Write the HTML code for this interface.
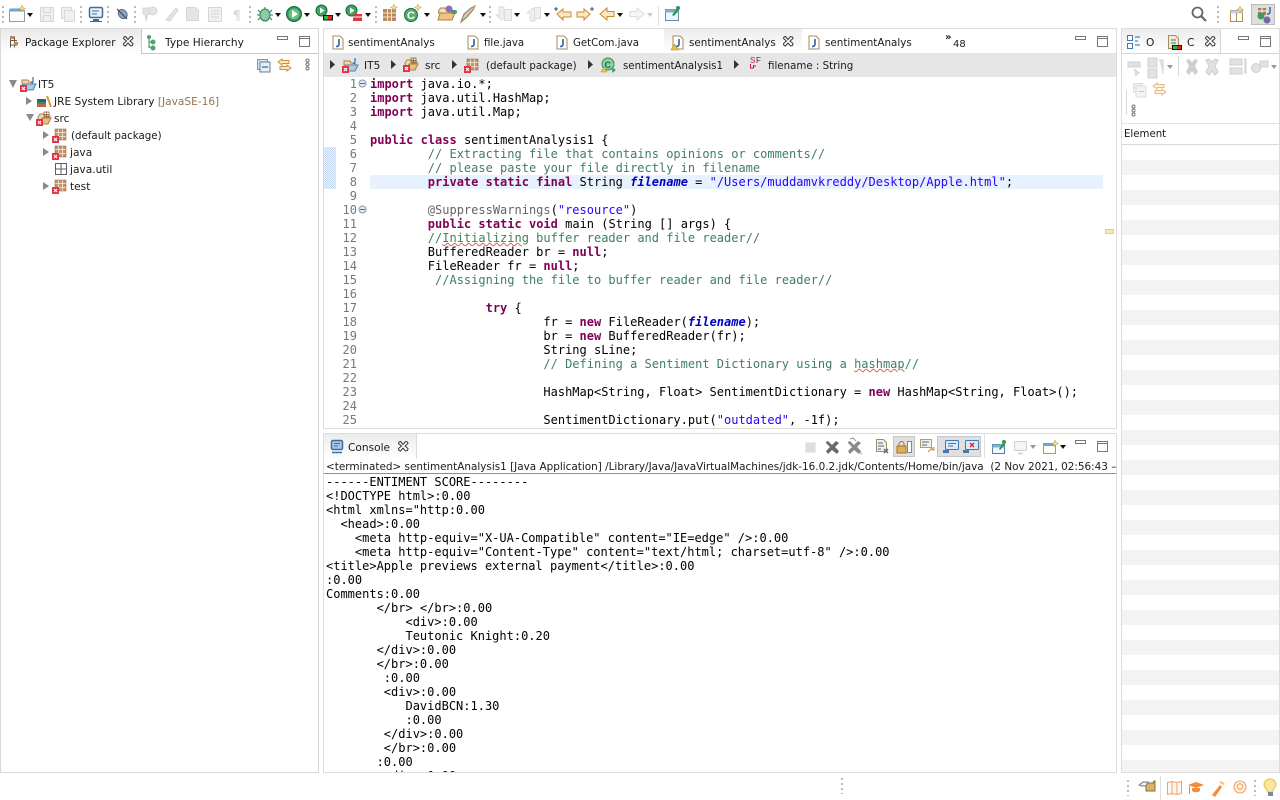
<!DOCTYPE html>
<html><head><meta charset="utf-8"><title>Eclipse</title>
<style>
html,body{margin:0;padding:0;background:#fff;width:1280px;height:800px;overflow:hidden}
body{position:relative;font-family:"DejaVu Sans","Liberation Sans",sans-serif;font-size:11px;color:#111}
.a{position:absolute}
.t{position:absolute;white-space:pre;line-height:14px;font-size:10.6px;color:#1a1a1a}
pre{position:absolute;margin:0;font-family:"DejaVu Sans Mono","Liberation Mono",monospace;font-size:12px;line-height:14px;tab-size:8;color:#000;overflow:hidden}
b.k{color:#7f0055;font-weight:bold}
i.f{color:#0000c0;font-weight:bold;font-style:italic}
.c{color:#3f7f5f}.s{color:#2a00ff}.n{color:#646464}
.w{text-decoration:underline wavy #e0604a 1px;text-underline-offset:0px}
svg{position:absolute;left:0;top:0}
</style></head><body>
<!-- panel frames -->
<div class="a" style="left:0;top:28px;width:317px;height:743px;border:1px solid #d8d8d8"></div>
<div class="a" style="left:1px;top:29px;width:141px;height:25px;background:linear-gradient(#e9e9e9,#fff)"></div>
<div class="a" style="left:141px;top:29px;width:1px;height:24px;background:#c8c8c8"></div>
<div class="a" style="left:141px;top:53px;width:177px;height:1px;background:#c8c8c8"></div>

<div class="a" style="left:323px;top:28px;width:792px;height:399px;border:1px solid #dcdcdc"></div>
<div class="a" style="left:664px;top:29px;width:138px;height:24px;background:linear-gradient(#ececec,#fff)"></div>
<div class="a" style="left:324px;top:53px;width:792px;height:24px;background:#e6e6e6"></div>
<div class="a" style="left:370px;top:175px;width:733px;height:14px;background:#e8f2fe"></div>
<div class="a" style="left:324px;top:147px;width:12px;height:42px;background:repeating-conic-gradient(#c4d6ee 0 25%,#f2f6fc 0 50%) 0 0/2px 2px"></div>
<div class="a" style="left:1105px;top:229px;width:9px;height:5px;box-sizing:border-box;background:#fbe8b4;border:1px solid #edc878"></div>

<div class="a" style="left:323px;top:433px;width:792px;height:338px;border:1px solid #dcdcdc"></div>
<div class="a" style="left:324px;top:434px;width:93px;height:25px;background:linear-gradient(#ececec,#fff)"></div>
<div class="a" style="left:416px;top:434px;width:1px;height:25px;background:#dcdcdc"></div>
<div class="a" style="left:324px;top:473px;width:792px;height:1px;background:#8f8f8f"></div>

<div class="a" style="left:1121px;top:28px;width:157px;height:743px;border:1px solid #dcdcdc"></div>
<div class="a" style="left:1122px;top:29px;width:98px;height:24px;background:linear-gradient(#ececec,#fff)"></div>
<div class="a" style="left:1122px;top:53px;width:157px;height:1px;background:#d4d4d4"></div>
<div class="a" style="left:1122px;top:123px;width:157px;height:1px;background:#e2e2e2"></div>
<div class="a" style="left:1122px;top:144px;width:157px;height:1px;background:#d8d8d8"></div>
<div class="a" style="left:1122px;top:145px;width:157px;height:627px;background:repeating-linear-gradient(#fff 0 15px,#f3f3f3 15px 30px)"></div>
<div class="a" style="left:1178px;top:29px;width:1px;height:24px;background:#e8e8e8"></div>
<div class="a" style="left:1220px;top:29px;width:1px;height:24px;background:#d4d4d4"></div>
<div class="a" style="left:1251px;top:4px;width:24px;height:21px;background:#dedede;border:1px solid #bdbdbd;box-sizing:border-box"></div>
<div class="a" style="left:893px;top:436px;width:22px;height:21px;background:#dfdfdf;border:1px solid #c6c6c6;box-sizing:border-box"></div>
<div class="a" style="left:937px;top:436px;width:44px;height:21px;background:#dfdfdf;border:1px solid #c6c6c6;box-sizing:border-box"></div>

<!-- text labels -->
<span class="t" style="left:25px;top:36px;font-size:10.5px">Package Explorer</span>
<span class="t" style="left:165px;top:36px">Type Hierarchy</span>
<span class="t" style="left:38px;top:78px">IT5</span>
<span class="t" style="left:54px;top:95px">JRE System Library <span style="color:#95744f">[JavaSE-16]</span></span>
<span class="t" style="left:54px;top:112px">src</span>
<span class="t" style="left:71px;top:129px;font-size:10.26px">(default package)</span>
<span class="t" style="left:70px;top:146px">java</span>
<span class="t" style="left:70px;top:163px">java.util</span>
<span class="t" style="left:70px;top:180px">test</span>

<span class="t" style="left:348px;top:36px;font-size:10.36px">sentimentAnalys</span>
<span class="t" style="left:484px;top:37px;font-size:10.2px">file.java</span>
<span class="t" style="left:573px;top:37px;font-size:10.2px">GetCom.java</span>
<span class="t" style="left:689px;top:36px;font-size:10.36px">sentimentAnalys</span>
<span class="t" style="left:825px;top:36px;font-size:10.36px">sentimentAnalys</span>
<span class="t" style="left:945px;top:31px;font-size:10px;font-weight:bold">»</span>
<span class="t" style="left:953px;top:38px;font-size:10px">48</span>

<span class="t" style="left:364px;top:59px">IT5</span>
<span class="t" style="left:425px;top:59px">src</span>
<span class="t" style="left:486px;top:59px;font-size:10.26px">(default package)</span>
<span class="t" style="left:623px;top:60px;font-size:10.2px">sentimentAnalysis1</span>
<span class="t" style="left:768px;top:59px;font-size:10.25px">filename : String</span>

<span class="t" style="left:1146px;top:36px">O</span>
<span class="t" style="left:1187px;top:36px">C</span>
<span class="t" style="left:1124px;top:128px;font-size:10.2px">Element</span>

<span class="t" style="left:348px;top:441px">Console</span>
<div class="a" style="left:326px;top:460px;width:790px;height:14px;overflow:hidden"><span class="t" style="left:0;top:0;font-size:10.43px">&lt;terminated&gt; sentimentAnalysis1 [Java Application] /Library/Java/JavaVirtualMachines/jdk-16.0.2.jdk/Contents/Home/bin/java  (2 Nov 2021, 02:56:43 – 02:56:44)</span></div>

<!-- line numbers -->
<pre style="left:336px;top:77px;width:21px;height:351px;text-align:right;color:#787878">1
2
3
4
5
6
7
8
9
10
11
12
13
14
15
16
17
18
19
20
21
22
23
24
25</pre>

<!-- code -->
<pre style="left:370px;top:77px;width:740px;height:351px"><b class="k">import</b> java.io.*;
<b class="k">import</b> java.util.HashMap;
<b class="k">import</b> java.util.Map;

<b class="k">public</b> <b class="k">class</b> sentimentAnalysis1 {
	<span class="c">// Extracting file that contains opinions or comments//</span>
	<span class="c">// please paste your file directly in filename</span>
	<b class="k">private</b> <b class="k">static</b> <b class="k">final</b> String <i class="f">filename</i> = <span class="s">"/Users/muddamvkreddy/Desktop/Apple.html"</span>;

	<span class="n">@SuppressWarnings</span>(<span class="s">"resource"</span>)
	<b class="k">public</b> <b class="k">static</b> <b class="k">void</b> main (String [] args) {
	<span class="c">//<span class="w">Initializing</span> buffer reader and file reader//</span>
	BufferedReader br = <b class="k">null</b>;
	FileReader fr = <b class="k">null</b>;
	 <span class="c">//Assigning the file to buffer reader and file reader//</span>

		<b class="k">try</b> {
			fr = <b class="k">new</b> FileReader(<i class="f">filename</i>);
			br = <b class="k">new</b> BufferedReader(fr);
			String sLine;
			<span class="c">// Defining a Sentiment Dictionary using a <span class="w">hashmap</span>//</span>

			HashMap&lt;String, Float&gt; SentimentDictionary = <b class="k">new</b> HashMap&lt;String, Float&gt;();

			SentimentDictionary.put(<span class="s">"outdated"</span>, -1f);</pre>

<!-- console -->
<pre style="left:326px;top:475px;width:790px;height:297px">------ENTIMENT SCORE--------
&lt;!DOCTYPE html&gt;:0.00
&lt;html xmlns="http:0.00
  &lt;head&gt;:0.00
    &lt;meta http-equiv="X-UA-Compatible" content="IE=edge" /&gt;:0.00
    &lt;meta http-equiv="Content-Type" content="text/html; charset=utf-8" /&gt;:0.00
&lt;title&gt;Apple previews external payment&lt;/title&gt;:0.00
:0.00
Comments:0.00
       &lt;/br&gt; &lt;/br&gt;:0.00
           &lt;div&gt;:0.00
           Teutonic Knight:0.20
       &lt;/div&gt;:0.00
       &lt;/br&gt;:0.00
        :0.00
        &lt;div&gt;:0.00
           DavidBCN:1.30
           :0.00
        &lt;/div&gt;:0.00
        &lt;/br&gt;:0.00
       :0.00
        &lt;div&gt;:0.00</pre>

<!-- icons -->
<svg width="1280" height="800" viewBox="0 0 1280 800" fill="none">
<defs>
<g id="grip"><g fill="#bbb"><rect x="0" y="0" width="2" height="2"/><rect x="0" y="5" width="2" height="2"/><rect x="0" y="10" width="2" height="2"/><rect x="0" y="15" width="2" height="2"/></g></g>
<path id="dd" d="M0 0h6l-3 4z" fill="#111"/>
<path id="ddg" d="M0 0h6l-3 4z" fill="#999"/>
<path id="xc" d="M-4-5l1.500-.5 2.500 3 2.500-3 2 .5.500 1.500-3 2.500 3 2.500-.5 2-2 .5-2.500-3-2.500 3-1.500-.5-.5-2 3-2.500-3-2.500z" stroke="#333" stroke-width="1" fill="#fff"/>
<g id="min"><rect x="0" y="0" width="10" height="3" fill="#fff" stroke="#777"/></g>
<g id="max"><rect x="0" y="0" width="10" height="10" fill="#fff" stroke="#777"/><path d="M0 2h10" stroke="#777"/></g>
<g id="rx"><rect x="0" y="0" width="7" height="7" fill="#dc3545"/><path d="M2 2l3 3M5 2l-3 3" stroke="#fff" stroke-width="1.200"/></g>
<g id="pkg"><rect x="3" y="0" width="11" height="11" fill="#c0946c"/><path d="M3 3.500h11M3 7.500h11M6.500 0v11M10.500 0v11" stroke="#efdcc6"/><rect x="3" y="0" width="11" height="11" stroke="#8a5f3c" stroke-width=".5"/><use href="#rx" x="0" y="7"/></g>
<g id="src"><path d="M2 5l2-3h4l1 2h5v3H6L3 12z" fill="#f3d9a8" stroke="#a8814f"/><path d="M3 12l3-6h9l-3 6z" fill="#e8bf7d" stroke="#a8814f"/><path d="M8 0h5v5H8zM10.500 0v5M8 2.500h5" stroke="#8a5f3c" stroke-width=".8"/><use href="#rx" x="0" y="7"/></g>
<g id="prj"><path d="M2 3h6l1 2h4v2H2z" fill="#f3d9a8" stroke="#a8814f"/><path d="M3 7h13l-3 6H3z" fill="#a8cbe8" stroke="#5580a8"/><path d="M13 0v4q0 1.500-2 1.500" stroke="#2f6db0" stroke-width="1.200"/><use href="#rx" x="0" y="8"/></g>
<g id="jf"><path d="M1 0h7l3 3v10H1z" fill="#fff" stroke="#a98a5f"/><path d="M7 3v5q0 2.500-3 2.500" stroke="#2f5f9f" stroke-width="1.600"/></g>
<g id="jfw"><use href="#jf"/><path d="M-1 14l3.500-6 3.500 6z" fill="#f2c23e" stroke="#b08a24" stroke-width=".6"/></g>
<g id="coll"><rect x="0" y="0" width="10" height="10" fill="#d8e2ea" stroke="#7f97a8"/><rect x="2.500" y="2.500" width="10" height="10" fill="#e8eef3" stroke="#5f7f98"/><path d="M4.500 7.500h6" stroke="#33709f" stroke-width="1.300"/></g>
<g id="link"><path d="M4 1L0 4l4 3V5.500h7V2.500H4zM9 7l4 3-4 3v-1.500H2v-3h7z" fill="#fde8c4" stroke="#cf8f3a"/></g>
<g id="vm"><circle cx="1.500" cy="1.500" r="1.500" stroke="#777" fill="#fff"/><circle cx="1.500" cy="5.500" r="1.500" stroke="#777" fill="#fff"/><circle cx="1.500" cy="9.500" r="1.500" stroke="#777" fill="#fff"/></g>
<g id="run"><circle cx="8" cy="8" r="7.500" fill="#2f9a55" stroke="#16693a"/><circle cx="8" cy="8" r="5.500" fill="#66bf83"/><path d="M6 4l6 4-6 4z" fill="#fff"/></g>
</defs>

<!-- main toolbar -->
<use href="#grip" x="2" y="6"/><use href="#grip" x="80" y="6"/><use href="#grip" x="107" y="6"/><use href="#grip" x="134" y="6"/><use href="#grip" x="249" y="6"/><use href="#grip" x="375" y="6"/><use href="#grip" x="489" y="6"/><use href="#grip" x="1217" y="6"/>
<g>
<path d="M9.500 10.500h15v11h-15z" fill="#fdfdf5" stroke="#8aa0b0"/><rect x="9.500" y="8.500" width="14" height="3" fill="#6ba4d6"/><path d="M22 5l1 2.500 2.500 1-2.500 1-1 2.500-1-2.500-2.500-1 2.500-1z" fill="#f7d888" stroke="#c09a3c" stroke-width=".5"/>
<use href="#dd" x="27" y="13"/>
<g stroke="#d8d8d8" fill="#f0f0f0"><rect x="40.500" y="7.500" width="13" height="14"/><path d="M43.500 7.500h7v5h-7zM43.500 15.500h7v6h-7z"/><rect x="61.500" y="7.500" width="10" height="11"/><rect x="64.500" y="10.500" width="10" height="11"/></g>
<rect x="89.500" y="7.500" width="13" height="10" rx="1.500" fill="#e8f0f8" stroke="#3d6d9e" stroke-width="1.500"/><path d="M92 11h7M92 14h5" stroke="#3d6d9e"/><path d="M93 19h6v2h-6z" fill="#3d6d9e"/><path d="M90 21.500h12" stroke="#3d6d9e"/>
<ellipse cx="122.500" cy="14.500" rx="4" ry="5" fill="#8aa7c0" stroke="#566a80" transform="rotate(-40 122 14)"/><path d="M117 9l10 10" stroke="#445" stroke-width="1.200"/>
<g fill="#e4e4e4" stroke="#d6d6d6"><path d="M143 8h8v6h-3l-2 7-1-7h-2z"/><circle cx="153" cy="11" r="4"/><path d="M166 20l10-12 2 2-8 11z"/><path d="M186.500 7.500h9l3 3v10h-12z"/><path d="M208.500 7.500h13v14h-13z" fill="#f0f0f0"/><path d="M211 11h8M211 14h8M211 17h8"/></g>
<text x="233" y="19" font-family="Liberation Serif" font-size="14" font-weight="bold" fill="#d8d8d8">¶</text>
<!-- debug -->
<g stroke="#2e7d6a"><path d="M258 10l3 3M272 10l-3 3M257 15h4M273 15h-4M258 20l3-3M272 20l-3-3M265 7v3"/></g><ellipse cx="265" cy="15" rx="5" ry="6" fill="#8ecb9f" stroke="#2e7d6a"/><use href="#dd" x="275" y="13"/>
<use href="#run" x="286" y="6"/><use href="#dd" x="304" y="13"/>
<!-- coverage -->
<circle cx="321.500" cy="10.500" r="5.500" fill="#3ea566" stroke="#16693a"/><path d="M320 7.500l4.500 3-4.500 3z" fill="#fff"/><rect x="323" y="15" width="10" height="5.500" fill="#111"/><rect x="324" y="16" width="4" height="3.500" fill="#2dbb3f"/><rect x="328" y="16" width="4" height="3.500" fill="#e8202a"/><use href="#dd" x="335" y="13"/>
<!-- external tools -->
<circle cx="351.500" cy="10.500" r="5.500" fill="#3ea566" stroke="#16693a"/><path d="M350 7.500l4.500 3-4.500 3z" fill="#fff"/><rect x="353" y="14" width="9" height="7" fill="#e0353f"/><path d="M353 17h9" stroke="#fff"/><use href="#dd" x="365" y="13"/>
<!-- new package -->
<rect x="383" y="9" width="13" height="12" fill="#b98a5e"/><path d="M383 13h13M383 17h13M387.500 9v12M391.500 9v12" stroke="#f3e2cc"/><path d="M394 4l1 2.500 2.500 1-2.500 1-1 2.500-1-2.500-2.500-1 2.500-1z" fill="#f7e098" stroke="#c09a3c" stroke-width=".5"/>
<circle cx="411" cy="15" r="6.500" fill="#58ad6a" stroke="#16693a"/><text x="407" y="19" font-family="Liberation Sans" font-size="11" font-weight="bold" fill="#fff">C</text><path d="M418 4l1 2.500 2.500 1-2.500 1-1 2.500-1-2.500-2.500-1 2.500-1z" fill="#f7e098" stroke="#c09a3c" stroke-width=".5"/><use href="#dd" x="424" y="13"/>
<path d="M438.500 11l2-3h5l1 2h6v3h-14z" fill="#f6dfb0" stroke="#a8814f"/><path d="M438 20l2-7h15l-3 7z" fill="#f0c47e" stroke="#a8814f"/><circle cx="449" cy="9" r="3.500" fill="#8b6fb5"/><rect x="451" y="10" width="6" height="4" rx="2" fill="#4d9a68"/>
<path d="M461 22l3-8 7-6 4-2-2 4-6 7z" fill="#d8c8a8" stroke="#8a7a60"/><path d="M472 7l3-2v3z" fill="#e3a040"/><use href="#dd" x="480" y="13"/>
<!-- annotations -->
<g fill="#efefef" stroke="#dcdcdc"><path d="M499 7h5v8h3l-5.500 5-5.500-5h3z"/><rect x="504.500" y="9.500" width="7" height="11"/><path d="M530 21v-8h-3l5.500-5 5.500 5h-3v8z"/><rect x="534.500" y="7.500" width="6" height="11"/></g>
<use href="#dd" x="514" y="13"/><use href="#dd" x="544" y="13"/>
<!-- nav arrows -->
<path d="M557 14l6-5v3h8v5h-8v3z" fill="#fde8c4" stroke="#c98a30"/><path d="M556 7v4M554 9h4" stroke="#33507a"/>
<path d="M590 14l-6-5v3h-7v5h7v3z" fill="#fde8c4" stroke="#c98a30"/><path d="M592 7v4M590 9h4" stroke="#33507a"/>
<path d="M600 14l7-6v3.500h7v5h-7V20z" fill="#fde8c4" stroke="#c98a30"/><use href="#dd" x="617" y="13"/>
<path d="M644 14l-7-6v3.500h-7v5h7V20z" fill="#f6f6f6" stroke="#dcdcdc"/><use href="#ddg" x="647" y="13" style="opacity:.5"/>
<path d="M658.500 6v20" stroke="#e0e0e0"/>
<rect x="665.500" y="9.500" width="13" height="11" fill="#eef6ff" stroke="#6a8aa0"/><rect x="665.500" y="9.500" width="13" height="3" fill="#84b0d0"/><path d="M672 15l5-7 2 2-5 6z" fill="#2e9a55"/><circle cx="678" cy="8" r="2" fill="#2e9a55"/>
<!-- right toolbar -->
<circle cx="1197.500" cy="12.500" r="5" stroke="#666" stroke-width="1.800"/><path d="M1201 16l5 5" stroke="#666" stroke-width="2.200"/>
<rect x="1230.500" y="10.500" width="12" height="11" fill="#fff" stroke="#b08a54"/><rect x="1230.500" y="10.500" width="12" height="3" fill="#bcd4ea"/><path d="M1236.500 13v8" stroke="#b08a54"/><path d="M1240 6l1 2.500 2.500 1-2.500 1-1 2.500-1-2.500-2.500-1 2.500-1z" fill="#f7d888" stroke="#c09a3c" stroke-width=".5"/>
<rect x="1258" y="8" width="8" height="7" fill="#a88058"/><path d="M1258 11h8M1262 8v7" stroke="#fff"/><path d="M1270 7v5q0 2-3 2" stroke="#2f6db0" stroke-width="1.500"/><circle cx="1261" cy="16" r="3.500" fill="#3e9a60"/><circle cx="1267" cy="20" r="3.500" fill="#7a63a8"/>
</g>

<!-- package explorer tabs -->
<g stroke="#6a5a4a"><path d="M10.500 36.500v11M14.500 36.500v11M10 40.500h7M10 45h7"/></g><rect x="10" y="36" width="4" height="3" fill="#b98a5e"/><rect x="14" y="42" width="4" height="3" fill="#b98a5e"/>
<use href="#xc" x="128" y="42"/>
<path d="M149 36v12M149 42h4M149 47h4" stroke="#3a8a5a"/><circle cx="149" cy="37" r="2" fill="#4da36a"/><circle cx="153" cy="42" r="2.500" fill="#4da36a"/><circle cx="153" cy="48" r="2.500" fill="#4da36a"/>
<use href="#min" x="277.500" y="36.500"/><use href="#max" x="299.500" y="36.500"/>
<use href="#coll" x="257.500" y="59.500"/><use href="#link" x="278" y="58"/><use href="#vm" x="306" y="59"/>

<!-- tree -->
<g fill="#8a8a8a"><path d="M9 80h8l-4 8z"/><path d="M26 97v8l6-4z"/><path d="M26 114h8l-4 7z"/><path d="M43 131v8l6-4z"/><path d="M43 148v8l6-4z"/><path d="M43 182v8l6-4z"/></g>
<use href="#prj" x="20" y="77"/>
<rect x="37" y="102" width="9" height="2.500" fill="#3f8a55"/><rect x="37" y="99" width="9" height="3" fill="#2f5f8f"/><rect x="37" y="104" width="9" height="3" fill="#b9684a"/><path d="M47 96l4 11" stroke="#d99a3a" stroke-width="2"/>
<use href="#src" x="36" y="112"/>
<use href="#pkg" x="52" y="129"/><use href="#pkg" x="52" y="146"/><use href="#pkg" x="52" y="180"/>
<rect x="55.500" y="163.500" width="11" height="11" stroke="#55606a"/><path d="M55 169h12M61 163v12" stroke="#55606a"/>

<!-- editor tabs -->
<use href="#jf" x="332" y="36"/><use href="#jf" x="467" y="36"/><use href="#jf" x="556" y="36"/><use href="#jfw" x="672" y="36"/><use href="#jf" x="808" y="36"/>
<use href="#xc" x="788" y="42"/>
<use href="#min" x="1075.500" y="36.500"/><use href="#max" x="1097.500" y="36.500"/>

<!-- breadcrumb -->
<g fill="#333"><path d="M330 60v9l5-4.500z"/><path d="M391 60v9l5-4.500z"/><path d="M452 60v9l5-4.500z"/><path d="M588 60v9l5-4.500z"/><path d="M734 60v9l5-4.500z"/></g>
<use href="#prj" x="342" y="58"/><use href="#src" x="403" y="58"/><use href="#pkg" x="464" y="59"/>
<circle cx="608" cy="64" r="6" fill="#8fd0a4" stroke="#2e8a58"/><text x="604.500" y="68" font-family="Liberation Sans" font-size="9" font-weight="bold" fill="#1e6a40">C</text><path d="M601 72l3-5 3 5z" fill="#f2c23e" stroke="#b08a24" stroke-width=".5"/><path d="M612 67l4 3-4 3z" fill="#3ea566"/>
<text x="750" y="63" font-family="Liberation Sans" font-size="8" fill="#c8203a">S</text><text x="756" y="63" font-family="Liberation Sans" font-size="8" fill="#333">F</text><path d="M750.500 64v4h3v-3M754 66h2" stroke="#c8203a"/>

<!-- fold icons -->
<g stroke="#8a9ab0" fill="#e4eaf2"><circle cx="362.500" cy="83.500" r="3.500"/><circle cx="362.500" cy="209.500" r="3.500"/></g><path d="M360 83.500h5M360 209.500h5" stroke="#5a6a80"/>

<!-- right panel -->
<rect x="1127.500" y="35.500" width="5" height="5" fill="#fff" stroke="#3a7ac0"/><rect x="1127.500" y="43.500" width="5" height="5" fill="#fff" stroke="#3a7ac0"/><path d="M1135 37h5M1135 41h3M1135 45h5" stroke="#3a6a9a"/>
<path d="M1168.500 35.500h7l3 3v10h-10z" fill="#f4ead4" stroke="#a08a60"/><path d="M1171 40h5M1171 43h5" stroke="#3a6a9a"/><rect x="1172" y="45" width="10" height="5" fill="#111"/><rect x="1173" y="46" width="4" height="3" fill="#2dbb3f"/><rect x="1177" y="46" width="4" height="3" fill="#e8202a"/>
<use href="#xc" x="1210" y="42"/>
<use href="#min" x="1238.500" y="36.500"/><use href="#max" x="1260.500" y="36.500"/>
<g fill="#e2e2e2" stroke="#d0d0d0"><rect x="1128" y="62" width="12" height="5"/><path d="M1134 69l5 4-4 3"/><rect x="1148" y="58" width="9" height="9"/><rect x="1148" y="69" width="9" height="9"/><path d="M1159 60h4v14"/><path d="M1186 60l3-1 3 3 3-3 3 1-3 6 3 6-3 3-3-4-3 4-3-3 3-6z" fill="#cfcfcf" stroke="none"/><path d="M1206 60l3-1 3 3 3-3 3 1-3 6 3 6-3 3-3-4-3 4-3-3 3-6z" fill="#e0e0e0"/><rect x="1230" y="59" width="12" height="6"/><rect x="1230" y="68" width="12" height="6"/><path d="M1244 59h2v14h-2"/><circle cx="1256" cy="68" r="4.500"/><rect x="1260" y="61" width="8" height="6"/></g>
<path d="M1178.500 56v20M1126.500 90v25" stroke="#d8d8d8"/>
<use href="#ddg" x="1167" y="65"/><use href="#ddg" x="1271" y="65"/>
<rect x="1133.500" y="83.500" width="9" height="9" fill="#f0f0f0" stroke="#ddd"/><rect x="1136" y="86" width="10" height="11" fill="#f4f4f4" stroke="#ddd"/><path d="M1138 91.500h6" stroke="#ccc"/>
<g opacity=".6"><use href="#link" x="1153" y="82"/></g>
<use href="#vm" x="1132" y="105"/>

<!-- console toolbar -->
<rect x="331.500" y="440.500" width="11" height="9" rx="1.500" fill="#a9c8e2" stroke="#3d6d9e" stroke-width="1.500"/><path d="M334 443.500h6M334 446h4" stroke="#3d6d9e"/><path d="M332 452.500h10" stroke="#3d6d9e" stroke-width="1.500"/>
<use href="#xc" x="403" y="447"/>
<rect x="805.500" y="442.500" width="10" height="10" fill="#dedede" stroke="#ececec"/>
<path d="M826 442l2-1 4 4 4-4 3 2-4 4 4 4-2 3-5-4-4 4-2-3 4-4-4-4z" fill="#6a6a6a"/>
<path d="M848 442l2-1 4 4 4-4 3 2-4 4 4 4-2 3-5-4-4 4-2-3 4-4-4-4z" fill="#8a8a8a"/><path d="M850 439l3-1 3 3M859 452l3 2" stroke="#999"/>
<path d="M876.500 439.500h7l3 3v9h-10z" fill="#f6f0e0" stroke="#9a8a70"/><path d="M878 443h5M878 446h6M878 449h3" stroke="#4a6a9a"/><path d="M884 449l4 4M888 449l-4 4" stroke="#666" stroke-width="1.500"/>
<rect x="897" y="446" width="9" height="7" fill="#e2b050" stroke="#a6702a"/><path d="M899 446v-2a2.500 2.500 0 015 0v2" stroke="#a6702a"/><rect x="907.500" y="441.500" width="4" height="11" fill="#fff" stroke="#7a8a9a"/>
<path d="M920.500 439.500h11v8h-11z" fill="#f6f0e0" stroke="#b39a70"/><path d="M922 442h7M922 445h5" stroke="#4a6a9a"/><path d="M928 452l4-4v2h2v-3" stroke="#cf8f3a" fill="#fde8c4"/>
<rect x="945.500" y="440.500" width="13" height="9" rx="1" fill="#dce8f4" stroke="#3d7aaf"/><path d="M948 443.500h8M948 446h5" stroke="#3d7aaf"/><path d="M943 450h6v3h-6z" fill="#3d7aaf"/>
<rect x="965.500" y="440.500" width="13" height="9" rx="1" fill="#dce8f4" stroke="#3d7aaf"/><path d="M970 443l4 4M974 443l-4 4" stroke="#d62a3a" stroke-width="1.400"/><path d="M963 450h6v3h-6z" fill="#3d7aaf"/>
<path d="M984.500 434v24" stroke="#e0e0e0"/>
<rect x="992.500" y="444.500" width="12" height="9" fill="#eef6ff" stroke="#5a7f98"/><rect x="992.500" y="444.500" width="12" height="3" fill="#7ab0d0"/><path d="M999 449l4-6 2 2-5 5z" fill="#2e9a55"/><circle cx="1004" cy="442" r="2" fill="#2e9a55"/>
<rect x="1014.500" y="441.500" width="12" height="9" rx="1" fill="#f4f4f4" stroke="#cfcfcf"/><path d="M1018 453.500h5" stroke="#cfcfcf" stroke-width="1.500"/><use href="#ddg" x="1030" y="445"/>
<rect x="1043.500" y="443.500" width="12" height="10" fill="#fdfdf5" stroke="#7aa0c0"/><rect x="1043.500" y="443.500" width="12" height="2.500" fill="#6ba4d6"/><path d="M1055 440l1 2.500 2.500 1-2.500 1-1 2.500-1-2.500-2.500-1 2.500-1z" fill="#f7d888" stroke="#c09a3c" stroke-width=".5"/><use href="#dd" x="1060" y="445"/>
<use href="#min" x="1075.500" y="440.500"/><use href="#max" x="1097.500" y="441.500"/>

<!-- status bar -->
<path d="M842 778v16" stroke="#bbb" stroke-width="2" stroke-dasharray="2 3"/>
<path d="M1128 780v16" stroke="#bbb" stroke-width="2" stroke-dasharray="2 3"/>
<path d="M1255 780v16" stroke="#bbb" stroke-width="2" stroke-dasharray="2 3"/>
<path d="M1160.500 776v24" stroke="#ddd"/>
<path d="M1147 783h6l1-2h1v10h-9v-5z" fill="#d9b36a" stroke="#8a6a34"/><path d="M1139 785l4-3h5l-2 4h-4z" fill="#eee" stroke="#777"/>
<g stroke="#f5a066" stroke-width="1" fill="#fff8f0"><path d="M1167.500 782.500l4.500-1 5 1 4.500-1v12l-4.500 1-5-1-4.500 1zM1172 781.500v13M1177 782.500v12"/></g>
<path d="M1188 785l8-3 8 3-8 3z" fill="#f28b3c"/><path d="M1192 788v3q4 2.500 8 0v-3" fill="#f28b3c"/><path d="M1189.500 786v8" stroke="#f28b3c"/>
<path d="M1212 795l8-10 2 2-7 10z" fill="#f28b3c"/><path d="M1220 781l3 1 2 2-2 1-3-2z" fill="#f9c08a"/>
<circle cx="1240" cy="787" r="6" fill="#fff1e0" stroke="#f5a066" stroke-width="1.100"/><path d="M1240 783.500l3 2-1 3.500h-4l-1-3.500z" stroke="#f5a066"/>
<path d="M1270 779a5.500 5.500 0 00-3.500 10l1 3h5l1-3a5.500 5.500 0 00-3.500-10z" fill="#fbe7a0" stroke="#edc85a" stroke-width="1.300"/><rect x="1268" y="792" width="5" height="4" fill="#7a8a9a"/>
</svg>
</body></html>
